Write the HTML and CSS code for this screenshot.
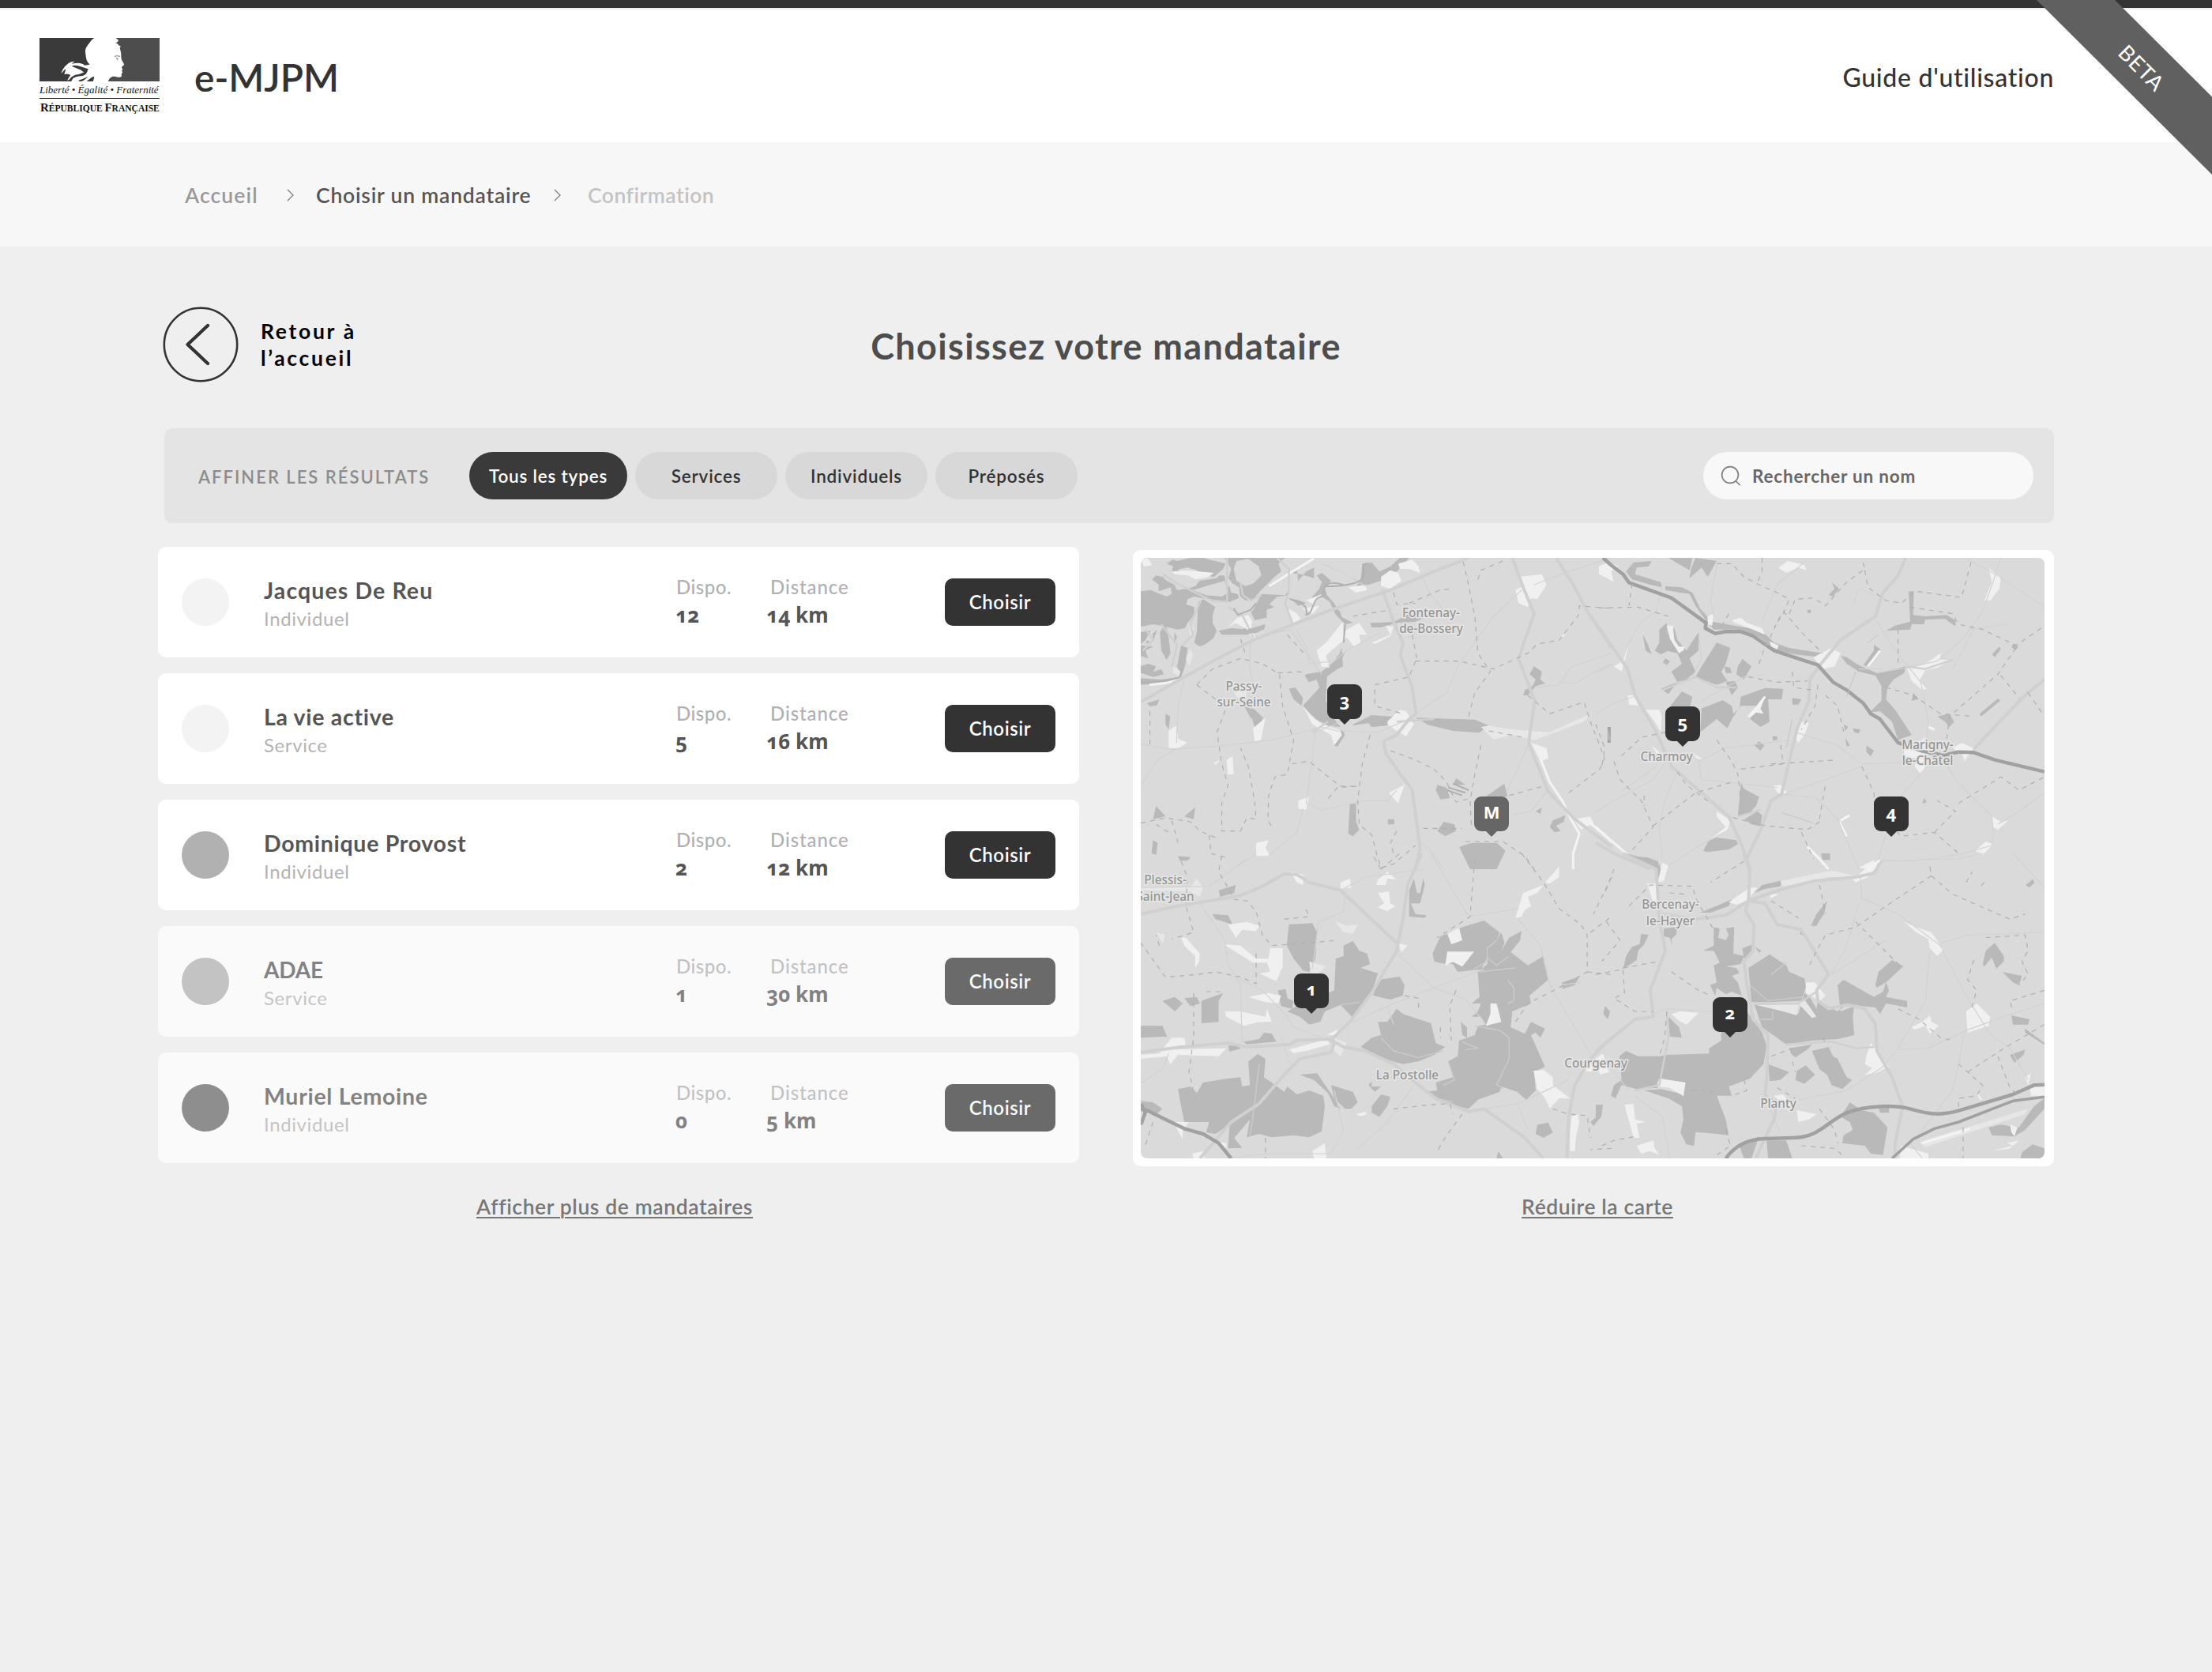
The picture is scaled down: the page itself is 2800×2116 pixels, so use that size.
FILE: index.html
```html
<!DOCTYPE html>
<html lang="fr">
<head>
<meta charset="utf-8">
<title>e-MJPM</title>
<link rel="stylesheet" href="styles.css">
</head>
<body>
<div class="topbar"></div>
<header class="header">
  <div class="logo">
    <svg class="logo-img" viewBox="150 144 456 165" preserveAspectRatio="none">
      <path fill="#3a3a3a" d="M150 144h230v165H150z"/>
      <path fill="#4d4d4d" d="M380 144h226v165H380z"/>
      <path fill="#fff" d="M358 144C347 150 343 160 334 170C325 183 322 188 325 205C327 222 328 234 341 245L322 248C312 240 300 238 289 240C276 240 272 243 268 248C275 240 278 236 284 233C268 232 255 243 247 252C240 260 236 268 232 279C240 272 243 266 250 262C248 270 246 276 244 283C252 277 262 282 268 285C262 292 258 298 256 307C265 300 270 296 278 296C275 301 272 305 271 309H330C338 302 346 294 357 291L354 309H411C414 296 424 289 434 290C444 292 456 296 461 291C464 285 459 282 463 278C467 274 466 271 461 269C465 267 467 264 464 260C460 255 464 252 468 250C473 247 471 243 468 238C462 228 459 220 460 210C461 200 456 190 455 181C460 178 458 172 452 173C449 170 448 165 437 163C446 162 452 155 448 150C444 149 442 147 441 144Z"/>
      <path fill="#3a3a3a" d="M274 250C292 244 314 256 336 262C332 268 328 273 322 275C306 266 288 262 274 258ZM286 284C304 282 320 274 333 266C330 280 322 288 304 289C294 290 284 294 276 297C258 304 262 296 286 284ZM300 305C312 300 322 296 334 290C326 300 318 306 308 309H298ZM330 309C340 300 350 292 358 290L352 309Z"/>
      <path fill="#fff" d="M268 250L312 268C302 276 290 274 272 281Z"/>
      <path fill="none" stroke="#999" stroke-width="4" d="M435 215C442 211 449 211 456 215M441 222C447 220 450 222 445 228"/>
    </svg>
    <div class="logo-motto">Liberté • Égalité • Fraternité</div>
    <div class="logo-name"><b>R</b>ÉPUBLIQUE <b>F</b>RANÇAISE</div>
  </div>
  <h1 class="brand">e-MJPM</h1>
  <a class="guide">Guide d'utilisation</a>
</header>
<div class="ribbon"><span>BETA</span></div>
<nav class="crumbs">
  <span class="c1">Accueil</span>
  <svg class="sep" viewBox="0 0 9 16"><path d="M1 1l7 7-7 7"/></svg>
  <span class="c2">Choisir un mandataire</span>
  <svg class="sep" viewBox="0 0 9 16"><path d="M1 1l7 7-7 7"/></svg>
  <span class="c3">Confirmation</span>
</nav>
<main class="main">
  <div class="head">
    <a class="back">
      <svg viewBox="0 0 96 96"><circle cx="48" cy="48" r="46.2" stroke-width="2.6"/><path d="M57 24L31.500 48L57 72" stroke-width="4.200"/></svg>
      <span class="back-text">Retour à<br>l’accueil</span>
    </a>
    <h2 class="title">Choisissez votre mandataire</h2>
  </div>
  <div class="filters">
    <span class="filters-label">AFFINER LES RÉSULTATS</span>
    <button class="pill on">Tous les types</button>
    <button class="pill">Services</button>
    <button class="pill">Individuels</button>
    <button class="pill">Préposés</button>
    <div class="search">
      <svg viewBox="0 0 26 27"><circle cx="12" cy="12" r="10.400"/><path d="M19 19.500l5.500 5.500"/></svg>
      <span>Rechercher un nom</span>
    </div>
  </div>
  <div class="cols">
    <section class="list">
      <article class="card"><i class="dot"></i><div class="who"><div class="name wide">Jacques De Reu</div><div class="kind">Individuel</div></div><div class="fact"><div class="lbl">Dispo.</div><div class="val">12</div></div><div class="fact dist"><div class="lbl">Distance</div><div class="val">14 km</div></div><button class="choose">Choisir</button></article>
      <article class="card"><i class="dot"></i><div class="who"><div class="name">La vie active</div><div class="kind">Service</div></div><div class="fact"><div class="lbl">Dispo.</div><div class="val">5</div></div><div class="fact dist"><div class="lbl">Distance</div><div class="val">16 km</div></div><button class="choose">Choisir</button></article>
      <article class="card"><i class="dot mid"></i><div class="who"><div class="name">Dominique Provost</div><div class="kind">Individuel</div></div><div class="fact"><div class="lbl">Dispo.</div><div class="val">2</div></div><div class="fact dist"><div class="lbl">Distance</div><div class="val">12 km</div></div><button class="choose">Choisir</button></article>
      <article class="card faded"><i class="dot mid"></i><div class="who"><div class="name caps">ADAE</div><div class="kind">Service</div></div><div class="fact"><div class="lbl">Dispo.</div><div class="val">1</div></div><div class="fact dist"><div class="lbl">Distance</div><div class="val">30 km</div></div><button class="choose">Choisir</button></article>
      <article class="card faded"><i class="dot dark"></i><div class="who"><div class="name">Muriel Lemoine</div><div class="kind">Individuel</div></div><div class="fact"><div class="lbl">Dispo.</div><div class="val">0</div></div><div class="fact dist"><div class="lbl">Distance</div><div class="val">5 km</div></div><button class="choose">Choisir</button></article>
      <a class="more more-list">Afficher plus de mandataires</a>
    </section>
    <section class="map-col">
      <div class="map-card">
        <div class="map">
          <svg class="map-svg" viewBox="1444 706 1144 760">
            <!-- river valley, north-west corner -->
            <g transform="translate(1440 700) scale(.33333)">
              <path class="f" d="M12 145L50 140L85 155L110 165L130 155L125 130L80 145L80 120L55 100L70 85L95 90L110 105L140 120L150 140L190 135L220 125L235 105L300 95L310 85H330L335 115L350 130L355 150L380 155L385 170L350 185L240 170L215 165L190 175L185 195L215 205L215 235L190 265L180 285L150 290L110 280L60 270L12 280Z"/>
              <path class="f" d="M110 40L135 25L150 30L200 18L250 18L285 28L335 40L325 60L290 90L250 85L225 65L190 55L160 60L145 75L130 70L135 50ZM330 18H560L535 40L545 70L520 90L490 120L465 145L440 175L410 180L390 165L385 130L360 115L345 95L355 60ZM230 185L250 175L295 205L285 235L285 265L300 295L290 320L260 345L235 355L215 340L225 300ZM440 215L470 155L530 165L500 195L520 205L490 215V245L445 255L430 225ZM470 155L560 160L580 135L570 160L500 170ZM570 170L615 180L640 190L610 200L595 185ZM580 75L605 60L610 105L640 70L670 55L670 95L620 80ZM700 75L735 105L710 130L720 160L745 190L770 225L780 260L750 230L730 185L700 165L660 170L690 135L700 110L680 85ZM310 300L360 285L400 290L420 275L415 295L340 310ZM440 285L480 280L460 300L440 305ZM12 300L50 295L30 330L12 345ZM85 300L105 270L115 300L125 380L110 405L90 370ZM12 350L60 355L30 370L40 400L12 390ZM40 320L75 290L60 330L30 345ZM165 350L190 360L180 430L165 470L150 430ZM12 430L40 420L70 430L60 450L90 440L100 460L60 470L12 455ZM140 300L150 320L140 340ZM12 475L90 480L160 470L150 482L90 495L12 500Z"/>
              <path class="f" d="M635 465L700 450L760 400L775 360L780 430L720 460L715 560L735 600L680 600L630 575L660 550L690 510L680 480L650 490ZM580 515L600 520L620 550L615 570L590 545ZM410 590L440 590L480 628H430ZM40 570L80 560L75 575L45 582Z"/>
              <path class="g" d="M375 30L420 22L460 50L470 85L440 115L410 125L375 105L365 60ZM365 205L430 180L455 185L440 210L380 235L365 225ZM40 305L60 310L50 340L35 330ZM210 140L330 105L345 150L320 165L260 160Z"/>
              <path class="u" d="M130 70L190 65L235 70L290 75L270 90L220 100L190 85L140 80ZM12 25L40 20L55 45L25 52ZM340 285L380 245L420 235L435 260L430 290L450 322L435 322L410 285L370 265ZM565 210L600 225L620 250L590 265ZM625 210L690 200L665 230ZM640 180L700 155L670 195ZM680 370L720 335L780 260V330L735 370L715 390L730 435L695 430L700 400Z"/>
              <path class="u2" d="M200 360L210 390L195 430L185 400ZM135 430L165 450L155 465L135 455ZM195 270L215 285L200 320ZM365 530L415 520L410 545L380 550Z"/>
              <path class="w" d="M45 500L110 493L175 475M500 125L580 75L670 20"/>
              <path class="r1" d="M95 80L150 115L240 160L280 180L340 185V18M390 110L400 160L430 180L470 160M345 205L400 240L440 320M530 20L575 60V150L560 190L590 270M30 290L60 330L20 370M90 270L150 350L130 430M240 180L200 270L210 310L170 350"/>
              <path class="k4" d="M365 210L380 235L430 215L450 190M705 165C700 115 730 105 780 120M700 165C660 170 670 230 640 235C650 200 620 185 580 175M12 492L100 485L160 472L170 440"/>
            </g>
            <!-- north-west quarter -->
            <g transform="translate(1420 680) scale(.39541 .33333)">
              <path class="f" d="M770 100L800 95L825 130L860 110L890 78L920 78L880 130L830 165L790 180L750 190L765 160ZM680 270L700 300L740 325L715 330L690 300ZM310 355L350 345L400 350L460 330L455 350L400 370L320 370ZM795 325L870 322L920 290L970 305L940 320L880 325L830 342L800 342ZM715 435L690 500L655 530L640 510L670 490L690 450ZM590 520L640 510L655 560L650 620L680 690L700 720L660 715L620 690L580 640L610 600L635 570L620 530L600 545ZM535 575L555 570L580 610L575 640L550 615ZM390 640L420 655L450 690L440 725L425 720L415 680ZM740 710L800 675L880 682L850 700L850 715L800 720L790 705L740 715ZM940 685L1130 692L1175 715L1145 742L1060 735L980 712ZM705 730L715 750L690 795L680 790ZM80 630L120 615L110 640L90 640ZM140 670L155 680L150 730L140 710ZM1320 490L1345 510L1340 540L1355 555L1325 565L1300 600L1285 600L1290 580L1315 565L1325 540L1305 520Z"/>
              <path class="f" d="M730 1010L750 1012V1080L760 1110L740 1135L725 1125ZM1165 985L1225 935L1235 985ZM1080 1175L1120 1160L1200 1160L1228 1190L1200 1260H1115ZM1010 940L1040 950L1050 990L1020 995L1005 960ZM1030 1080L1065 1090L1070 1115L1035 1135L1010 1115ZM1070 915L1100 940H1060ZM1380 1075L1420 1055L1415 1080L1390 1095L1405 1115L1385 1120L1370 1100ZM235 1025L230 1070L200 1060ZM110 1020L140 1060L100 1070ZM100 1150L115 1160L110 1205L95 1200ZM180 1210L220 1215L210 1228H185ZM1325 1040L1345 1025L1340 1050ZM852 1070H872V1090H852Z"/>
              <path class="u" d="M830 150L860 125L885 135L895 165L860 195L830 185ZM885 100L930 85L950 110L955 135L920 120L890 120ZM725 190L780 180L785 200L750 210ZM1270 150L1345 140L1360 180L1330 235L1310 230L1300 265L1270 250L1260 200L1285 185ZM1530 115L1568 105V165L1530 140ZM720 350L760 325L785 370L760 370L765 400L745 418L720 380L690 410L650 450L660 490L640 490L625 435L660 395L690 400ZM800 400L860 370L845 335L870 340L860 375L810 405ZM580 640L600 670L640 710L695 730L705 750L680 790L670 750L610 710ZM850 700L890 655L910 660L935 710L910 755L880 735L855 715ZM150 735L175 715L180 765L210 780L180 800L150 800ZM420 725L460 685L445 770L425 775ZM335 845L355 830L358 900L340 900ZM855 970L905 940L885 1010L865 985ZM565 1000L600 985L590 1035L565 1030ZM430 1160L470 1150L460 1180L475 1210L430 1210ZM1310 780L1360 800L1365 840L1340 850ZM1445 1070L1500 1060L1510 1085L1470 1110ZM295 855L315 845L300 865ZM1405 375L1425 365L1410 380Z"/>
              <path class="u2" d="M1150 720L1175 715L1250 730L1370 740L1500 670L1480 700L1400 735L1320 770L1250 750L1190 768Z"/>
              <path class="w" d="M1340 840L1370 930L1410 1000L1440 1075L1465 1125L1445 1200V1260M1500 1085L1568 1155"/>
              <path class="r" d="M61 625L200 530L300 465L420 390L540 335L660 280L860 200L1010 125L1110 78M835 200L870 320L900 400L892 450L930 570L942 670L920 690L880 750L838 775L845 820L880 880L930 960L940 1050L955 1180L940 1260M1250 78L1285 190L1320 290L1270 460L1322 620L1302 780L1365 965L1450 1070L1568 1175M1390 78L1440 170L1490 280L1568 420"/>
              <path class="r2" d="M61 785L160 805L330 790L480 770L640 720L690 735L820 740L900 700M200 540L180 640L175 780M410 390V500L430 640M640 520L540 350L430 380M660 490L720 430L830 360M940 670L1040 590L1080 480L1190 300L1280 200M1400 550L1450 555L1500 520L1568 480M720 690L620 740L605 880L590 1010L640 1035L780 1000L850 1000L880 960M61 940L120 840L180 800M1300 790L1260 900L1230 970M1320 570L1400 560L1440 490L1568 440M1320 180L1430 130L1568 78M960 150L990 220L1040 290M640 100L700 130L780 185M430 1200L370 1250M470 1210L560 1120L580 1030M940 1140L990 1190L1030 1260M680 470L600 480L590 420L560 350M1250 1055L1310 1040L1365 960"/>
              <path class="r1" d="M660 700L610 740M880 700L1000 690"/>
              <path class="d" d="M240 560L290 500L380 460L450 480L505 520L515 640L550 770L530 900L490 910L470 980L468 1070L480 1105M240 560L300 615L330 660L305 740L320 860L340 940L320 1010V1115H380L400 1065L430 1070L425 1000L405 870L380 800M500 515L570 510L600 530M940 470H1080L1190 500L1300 440L1330 405L1400 390L1460 300L1465 260L1568 270M940 470L920 530L810 560V640L900 670M1110 680L1130 590L1180 510L1140 440L1130 300L1110 180L1090 78M920 250L1020 200L1060 195M870 210L880 255L940 250M740 300L860 275M1140 160L1150 125L1230 85M1300 600L1370 670L1480 625L1500 700L1530 790L1545 840L1530 880L1420 980M1175 735L1290 760M1150 790L1130 900L1115 1000L1120 1110M795 750L770 860L755 1000L760 1090L800 1130L820 1220L830 1255L870 1240L940 1170M545 860L600 850L640 890L700 945H755L690 950L655 1000M860 810L940 845L1000 880L1040 930L1070 1005L1120 990M1240 980L1350 945M1100 1155L1220 1155L1290 1210L1320 1260M965 1105H1090M880 1115L860 1160L870 1200M61 1085L140 1065L220 1080L250 1115L310 1145M160 1075L180 1160M110 1090L150 1120M280 1130L285 1200L330 1215M90 660V790M930 370L945 465M530 370L590 450M380 385L395 440"/>
              <path class="d k" d="M650 185C700 190 770 175 770 150C785 130 760 110 785 98M715 330L710 400M1040 960L1090 980M1045 950L1100 970M1060 935L1110 960"/>
              <path class="k2" d="M1540 78L1568 110M1560 720V780"/>
            </g>
            <!-- north-east quarter -->
            <g transform="translate(2020 680) scale(.38265 .33333)">
              <path class="f" d="M100 130L125 95L185 90L175 110L135 115L130 140L215 170L220 190L180 180L120 160ZM240 78H320L310 125L280 105ZM330 78L400 90L370 150L350 115L310 155L315 120ZM230 185L285 190L320 210L345 270L385 320L480 340L545 350L590 400L640 420L750 440L740 455L660 445L600 430L540 380L470 350L390 350L360 310L330 260L310 215L280 210L230 200ZM240 350L260 345L270 390L300 430L340 360L340 430L310 460L330 510L300 540L270 550L250 510L285 480L270 440L230 430ZM210 350L235 325L240 430L215 445L195 430L210 400ZM155 370L170 400L185 445L165 430ZM400 400L445 420L430 480L415 510L435 545L400 560L330 530L350 490ZM485 462L515 490L490 540L465 520L470 490ZM215 575L270 550L240 595ZM430 550L460 545L470 570L450 600ZM285 585L320 605L310 650L240 650ZM350 650L420 618L450 640L455 670L475 650L480 605L560 572L620 575L615 615L570 615L575 700L545 720L510 690L530 640L480 640L455 680L435 725L400 690L345 740ZM650 610L680 615L670 635L650 635ZM780 170L805 195L785 225L770 220L790 195ZM1035 205H1052L1050 295L1090 300L1160 295L1190 315V338L1155 310L1090 312L1085 330L1045 330L1040 350L960 355L990 335L1040 320ZM755 460L790 450L795 475L770 495ZM920 408L942 425L895 490L885 485L920 430ZM810 450L830 455L870 485L930 515L990 500L1025 490L1020 515L985 540L965 570L960 615L990 655L1045 750L1000 770L980 700L940 660L905 665L945 620L945 565L925 525L870 510L830 480ZM1270 670L1330 612L1338 620L1275 680ZM1130 680L1170 670L1185 700L1170 720L1155 700ZM1380 405L1398 415L1390 428L1375 418ZM1310 445L1335 415L1340 425L1320 455ZM1050 590L1068 615L1045 620ZM480 930L490 955L540 985L530 1020L510 1045L470 1060ZM492 1070L535 1040L550 1055L545 1097L515 1090ZM375 1150L400 1140L465 1150L470 1165L440 1185L370 1195L355 1190ZM525 790L540 775L558 790L545 810ZM585 755H600V770H585ZM895 790L920 810L910 832L895 815ZM820 710L835 720L825 735ZM825 760L840 790L830 795ZM105 1210L170 1215L205 1230L215 1260H195L165 1225L130 1225ZM1085 990L1095 1005L1080 1012ZM40 720L50 770L40 770Z"/>
              <path class="f" d="M230 460L245 470L235 485L222 475ZM425 490L445 495L450 515L430 515ZM850 725L875 730L870 745L855 740ZM700 275H712V287H700ZM745 1200H775V1225H750Z"/>
              <path class="u" d="M10 110L45 95L75 110L50 130L60 170L30 150L10 140ZM605 115L635 90L690 105L697 125L670 115L630 135L610 120ZM1300 118L1340 150L1335 195L1305 240L1285 240L1310 170ZM235 335L255 335L260 390L275 415L295 415L290 430L275 440L245 385ZM450 315L480 305L500 325L550 345L560 370L520 350L460 325ZM60 490L90 470L108 405L100 450L85 510ZM105 600H130L140 640L110 635ZM165 655L210 655L218 680L215 740L195 700ZM1030 500L1090 480L1140 440L1140 465L1180 465L1130 495L1090 505L1070 545L1095 575L1080 580L1045 545ZM720 455L780 420L810 440L790 490L750 500ZM680 700L705 705L690 750L670 780L660 760ZM400 1040L445 1075L435 1115L375 1150L430 1100L400 1060ZM1020 810L1090 760L1100 800L1090 870L1075 900L1055 870L1060 840L1020 830ZM1180 800L1210 780L1250 800L1220 850L1210 820ZM585 945L610 940L635 970L610 980ZM500 680L560 605L545 650L555 670L530 665L510 685ZM185 790L225 830L200 820ZM320 820L360 845L335 840ZM1310 1060L1340 1080L1365 1075L1330 1110L1315 1100ZM1255 1190L1290 1155L1315 1165L1280 1205ZM870 1255L920 1225L925 1245L900 1260ZM575 395L605 410L600 425L580 415ZM370 300L390 290L385 335L370 330Z"/>
              <path class="w" d="M0 1100L105 1205M900 490L940 430M805 1080L830 1135M810 1075L840 1055M700 1175L735 1215L770 1260M560 605L510 680M1100 720L1120 730"/>
              <path class="r" d="M0 325L60 425L105 500L130 600L200 740L250 870L350 970L440 1060L480 1160L510 1260M1025 78L1000 145L950 210L925 300L810 390L745 480L708 540L705 620L665 730L640 850L615 975L580 1000L545 1110L500 1220M1484 540L1410 610L1250 805M0 1160L60 1200L180 1260"/>
              <path class="r2" d="M0 515L60 480M0 670L60 630L140 600M0 1045L60 1000L190 920L240 840M200 280L150 320L100 420M200 280L220 180M405 80L380 240L390 300M690 95L600 180L550 320M660 740L800 790L880 860L1040 855M630 970L760 920L880 870M620 975L730 990L800 1070L870 1260M1340 78L1320 150L1280 280L1210 390L1130 470L1030 495L930 515M1230 85L1330 145L1484 265M930 320L990 430L1075 550L1100 700L1095 760M1240 350L1360 330M1180 500L1250 350M340 850L430 800L640 770M340 850L350 920L480 935L600 950M1150 840L1190 920L1310 1060L1315 1120L1310 1170L1200 1205L1040 1230L940 1225M1080 890L990 1010L930 1240M200 870L90 960M560 520L490 530L350 620M340 360L350 460L320 530M1484 970L1400 1040L1330 1090M270 890L230 990L210 1100L220 1220M230 1255L330 1180L440 1110M870 190L920 220M870 195L850 260M950 500L870 500"/>
              <path class="r1" d="M220 580L330 530L400 570H465M470 1060L545 1035M1030 490L1090 500L1180 465"/>
              <path class="h" d="M25 78L50 105L90 140L110 172L250 230L365 325L362 345L395 365L430 358H480L520 375L590 430L735 485L785 550L830 580L885 630L910 670L940 690L1000 780L1080 812L1150 828L1200 815L1250 817L1320 845L1484 890"/>
              <path class="d" d="M10 268L140 265L240 300M120 175L110 260M400 100H450L490 150L540 180L600 210L640 235L620 290L590 340M620 280L680 360L750 440M640 290L660 235L720 230L760 260L830 170L890 120L880 78M890 125L900 190L960 240L1010 250L1060 205L1210 228L1245 78M1040 265L1180 290L1200 330L1280 350L1390 410L1480 340M1390 420L1330 520L1230 620L1170 680L1160 770M1340 525L1400 610M1430 590L1484 680M550 78V130L535 170M540 480L555 430L610 300M440 290L420 330M505 530L600 550L700 545M735 560L725 640L680 730M760 600L800 640L820 740M580 860L660 855L800 845M400 770L450 850L470 900L480 1000M480 880L620 860L610 780M0 710L30 800L20 870M60 850L80 920L150 1000L190 1100L110 1200M85 830L150 760L230 740M190 1095L330 970L450 930M880 870L920 970L925 1030L1010 1135L1120 1120L1200 1200M1120 1120L1190 1040L1130 1000M1200 1010L1340 910L1400 960L1484 910M740 1080L700 1110L560 1095L440 1060M740 1070L750 1000L760 940M680 1120L720 1220M960 570L1050 600L1140 670L1250 680M1000 350L1000 480M270 890L300 940L380 1010M160 980V1020M650 510L655 570L720 580"/>
              <path class="k3" d="M830 605L860 510M615 1045L720 1085M650 690L630 800M935 370L900 400"/>
            </g>
            <!-- south-west quarter -->
            <g transform="translate(1420 1080) scale(.39541 .33333)">
              <path class="f" d="M535 270L610 265L625 300L620 400L600 450L580 445L550 400L528 350ZM710 350L740 332L760 370L785 380L795 420L765 435L820 455L800 530L740 625L700 575L650 600L635 640L600 650L570 620L530 600L560 580L680 520L685 400L710 390ZM500 520L525 515L530 550L550 560L545 590L510 580ZM820 480L890 468L905 500L900 540L860 555L805 540ZM1090 280L1160 255L1210 300L1200 330L1150 440L1075 450L1060 420L1035 420L1000 410L995 380L1020 315ZM1200 330L1215 300L1225 340L1215 370L1240 320L1280 295L1275 330L1245 375L1300 425L1350 390L1365 480L1305 540L1310 570L1250 600L1245 660L1290 685L1310 640L1355 665L1340 700L1325 680L1310 690L1355 810L1320 830L1325 900L1295 935L1265 905L1215 885L1210 905L1140 935L1110 970L1040 950L975 905L1010 900L1005 870L1060 850L1045 790L1075 770L1080 710L1130 690L1140 655L1165 650L1150 620H1120L1140 600L1150 570H1120L1145 545L1140 450L1170 420L1175 360ZM1085 640L1105 660V700L1090 690ZM820 640L850 640L880 590L900 610L990 645L1005 720L1035 735L1000 765L950 790L900 800L840 780L765 735L800 700L830 690ZM290 230L340 235L355 270L300 250ZM310 140L365 120L360 150L315 165ZM130 560L170 545L195 570L170 600ZM200 550L240 545L250 570L220 580ZM255 560L325 530L310 560V640L255 645ZM61 655L130 655L145 695L61 700ZM390 715L440 705L455 680L480 685L495 715L400 725ZM340 730H370L380 742L345 752ZM920 140L935 95L945 150L955 150L965 95L970 120L955 190L925 190L940 230L975 235L970 245L920 240Z"/>
              <path class="f" d="M405 790L435 762L460 780L455 850L480 870L520 905L530 885L560 915L600 900L645 920L650 960L640 1055L600 1078L550 1070L480 1078L440 1065L400 1078L410 1010L360 1080L385 1118L340 1120L345 1030L300 1065L270 1060L280 1020L200 1020L190 960L180 895L220 885L240 910L260 870L340 855L380 850L385 885L410 880ZM570 840L625 835L680 930L700 970L680 960L660 910L615 860L590 850ZM670 880L740 905L755 945L735 970L715 970L680 930ZM790 880L800 865L800 885L830 885L810 905ZM800 960L830 915L860 925L850 960L825 1000L800 985ZM1410 490L1465 468L1450 500L1410 515ZM1330 1030L1365 1022L1380 1060L1350 1080L1325 1065ZM1520 955L1540 955L1535 1000L1510 1035L1500 1020L1520 1000ZM1545 580L1560 600L1550 625ZM61 940L100 945L130 970L110 990L75 980ZM1205 1130L1220 1158H1200ZM1090 0H1125L1110 25ZM1135 0H1220L1200 50L1160 40Z"/>
              <path class="u" d="M1042 305L1080 283L1090 330L1055 345ZM1042 373H1128L1090 430L1060 412L1035 427ZM1180 570L1200 570L1215 640L1165 655L1180 610ZM340 270L400 260L440 275L430 295L385 290L365 320ZM325 345L380 350L430 400L470 400L475 360L515 360L515 430L495 485L440 455L475 450L465 415L420 415ZM405 545L470 530L510 540L500 570L460 565ZM330 600L380 600L460 620L465 590L480 640L440 640L390 655L335 620ZM190 320L205 320L250 380L248 410L235 435L235 390L200 350ZM820 150L855 145L860 190L875 200L850 220L820 205L840 190ZM820 100L850 70L880 100L850 95L845 120L815 120ZM535 745L660 705L665 725L590 750L550 758ZM655 690L690 668L690 690ZM61 765L120 760L160 700L200 700L205 730L150 745L335 740L310 770L180 765L155 800L145 770L61 780ZM1355 110L1400 50L1400 90L1370 115ZM1285 150L1350 120L1330 150L1300 165L1310 200L1290 215L1280 240L1260 245ZM1318 825L1350 822L1380 850L1380 880L1435 930L1400 930L1370 968L1355 930L1330 895ZM1440 1000L1460 990L1465 1020L1455 1070L1450 1130H1435L1435 1060ZM885 340L915 350L895 375ZM750 990L780 980L785 990L765 998ZM1470 820L1540 760L1550 790L1500 830ZM540 70L580 80L580 120L560 110ZM700 110L730 95L735 130L700 135ZM610 1130L650 1100L655 1158H615ZM225 1140L260 1130L265 1158H230ZM310 1095L335 1100V1120ZM165 1020L215 1020L195 1050V1085Z"/>
              <path class="u2" d="M600 410L655 430L630 455H605ZM680 255L720 275L755 270L740 305L710 300ZM110 300L140 310L130 340ZM61 125L220 130L240 95L260 130L250 165L220 145L61 140ZM675 700L720 720L700 770L680 750Z"/>
              <path class="r" d="M61 230L180 200L380 160L450 125L520 78L560 80L600 110L700 140L880 340M960 0L915 120L900 250L880 370L800 530L730 640L670 708L710 735L780 750L870 800L950 880L1010 935L1110 980L1160 970L1290 1080L1350 1158M61 755L190 735L340 720L400 735L540 725L560 710L660 705L680 720L670 755L570 780L520 840L440 950L350 1020L250 1158M1568 700L1500 780L1450 880L1430 1000L1425 1158"/>
              <path class="r2" d="M880 380L1000 510L1100 555L1160 640M1000 510L850 580L740 640M1000 510L1160 440M715 160L710 220L630 260L610 440M250 190L330 330L340 420L380 500L385 720M380 480L450 520L530 620L550 660L640 700M61 870L130 820L150 760M930 890L850 1020L750 1130M680 900L710 1050L670 1140H460L340 1158M1270 250L1340 350L1370 500L1500 760M1370 505L1470 490M1160 970L1270 950L1430 860M1270 960L1300 1050M990 0L1110 240L1270 210M510 700L540 800M700 140L780 90L970 60M61 130L280 125L400 20M850 580L870 650"/>
              <path class="r1 th" d="M1130 655L1210 672L1240 700V750L1240 780L1200 880L1220 890M1200 330L1170 360V410L1120 445M440 800L420 1000L410 1070M1175 400L1200 425L1240 390M1145 450L1260 435M1235 480L1255 510V560L1235 570M1090 715L1140 740L1100 745M830 700L870 750L950 775L1030 750M1045 790L1065 860L1030 880M1010 930L1060 945M700 575L760 565"/>
              <path class="h" d="M61 970L85 978L140 1010L200 1045L260 1065L310 1100L350 1158M61 950L75 985L61 1030"/>
              <path class="d" d="M190 30L210 90L205 200L230 300L160 325M320 10L310 70L340 130L360 175L400 180L430 220L450 310L480 350L600 340L690 330M430 380V495L380 470L300 450L240 460L140 470L61 340M230 530V700L215 830L235 930M270 525L330 525M830 60L800 0M830 60L890 0M1130 20L1115 240L1010 320M1280 0L1350 110L1400 210L1470 270L1490 310V450L1400 510L1300 570L1260 640M1490 450L1568 460M1070 520L1050 580L1055 710M1020 660V700M870 970L980 955L1050 950L1060 990M1090 990L1040 1070L1010 1130M1380 970L1430 990L1490 995L1500 1080M520 250L600 240L585 200M120 350L110 310M905 540L950 550V590M1568 90L1510 230M1500 300L1568 240M100 1020L75 1110M460 1080V1158M1568 1120L1500 1125"/>
            </g>
            <!-- south-east quarter -->
            <g transform="translate(2020 1080) scale(.38265 .33333)">
              <path class="f" d="M100 0L150 15L190 25L215 60L210 95L190 55L150 30ZM525 150L550 120L615 103L610 125L560 135ZM345 225L420 190L450 175L440 200L380 225ZM225 285L270 280L265 310L250 325L255 355L245 320L225 315ZM150 305L175 310L160 345L140 370L135 405L90 440L100 390L120 355L145 345ZM765 180L755 230L740 255L730 275L712 275L730 230ZM390 280L410 285L405 320L430 330L440 310L430 285L458 280L455 380L490 390L480 420L430 430L465 435L475 455L450 465L470 490L483 540L450 525L430 535L400 510L395 540L378 500L400 490L390 425L410 415L390 370L355 370L390 350ZM485 360L520 345L525 360L490 400ZM575 383L630 425L640 450L690 475L695 505L680 560L570 565L515 565L505 435ZM525 355L548 370L540 377ZM800 500L820 480L920 545L950 525L960 490L970 520L960 545L1030 560L1030 585L960 570L940 610L925 585L880 580L835 570L800 600L735 560L730 590L710 550L690 530L670 610L560 580L525 575L550 660L630 725L720 710L800 705L855 690L850 620L855 580L810 600ZM925 500L935 450L980 405L1018 428L960 490L930 510ZM500 600L550 680L565 730L555 800L510 855L440 885L450 920L400 920L430 1010L440 1070L400 1065L330 1058L325 1110L300 1105L280 1060L290 1010L285 960L240 930L160 900L215 895L290 915L295 870L215 855L205 890L135 895L85 880L65 930L50 920L60 880L85 860L78 770L100 750L140 770L210 770L235 765L375 760V740L415 710V640L440 620ZM640 740L715 725L700 745L660 775L645 760ZM715 750L770 735L785 770L800 780L830 850L848 860L815 895L780 880L765 840L740 820ZM570 800L640 830L610 860L575 865ZM695 805L725 840L690 875L660 860L665 825ZM840 945L880 975L920 985L965 1040L950 1145L910 1140L890 1110L815 1100L820 1070L850 1050L840 1020L810 1000ZM1280 420L1290 370L1320 340L1350 390V410L1325 438L1310 395L1285 430ZM1345 450L1410 465L1400 500L1380 490ZM1375 615L1435 630L1430 650L1380 650ZM1420 665L1484 720V727L1420 680ZM1370 765L1420 745L1415 765L1385 795ZM1300 1040L1340 1030L1400 1040L1450 960L1484 930V970L1420 1050L1385 1075L1310 1070ZM1410 1135L1445 1105L1484 1120V1158H1405ZM1445 98L1452 110L1435 130L1422 120ZM475 1110L540 1075L515 1158H490ZM565 1090L630 1090L650 1158H570ZM30 580L47 600L40 630L25 610ZM0 955H22L18 1000L0 1010ZM240 620L275 660L285 700L245 695ZM680 280L690 315L675 305ZM935 965H970V985H940Z"/>
              <path class="u" d="M170 115H200L205 180L190 190L180 150ZM440 185L510 130L535 130L500 180L465 195ZM570 150L605 155L580 170ZM220 35L240 45L225 105L205 110ZM850 100L890 60L930 30L930 50L900 90L860 110ZM1020 260L1060 280L1110 300L1150 365L1130 390L1105 360L1100 325L1060 300ZM695 490L725 490L760 540L740 560L695 530ZM250 610L280 600L340 605L300 650L275 635ZM1045 660L1080 640L1105 615L1110 640L1135 655L1105 685L1090 655L1055 670ZM1225 600L1260 570L1305 620L1300 655L1230 680ZM895 770L910 720L970 810L925 835L890 840L915 815L890 800ZM210 855L297 870L290 922L245 890L200 885ZM665 975L730 990L705 1010L670 1020ZM95 955L125 950L130 1010L165 1020L135 1025L145 1080H125ZM135 1110L190 1090L195 1120L210 1145L180 1130L150 1140ZM1420 850L1440 835L1430 880ZM1435 890L1484 880V920H1440ZM1310 1130L1380 1110L1360 1100L1400 1090L1370 1120ZM590 920L620 915L650 960L635 975ZM1005 1158L1010 1110L1100 1140V1158ZM1260 905L1280 935H1270ZM0 800L30 790L45 830L15 840ZM1370 1030L1395 1040L1385 1075L1375 1060Z"/>
              <path class="u2" d="M610 105L780 65L860 85L840 90L770 90L620 125ZM1070 1095L1430 970L1420 990L1090 1115ZM530 575L670 570L665 615L620 600ZM670 570L690 555L730 620L715 625Z"/>
              <path class="r" d="M490 0L510 70L505 175L495 220L523 270L520 370L490 410L500 500L520 630L570 690L565 850L560 920L600 950L590 1010L560 1080L530 1158M505 180L560 190L600 270L680 290L770 460L730 520L735 560L770 590L830 575L890 590L925 650L930 750L980 850L1015 960L990 1100V1158M505 180L620 135L720 105L860 90L920 75L945 30M505 180L430 235L330 250L220 230M90 0L200 60L210 250L230 370L180 520L190 620L130 630L0 750"/>
              <path class="r1" d="M630 725L780 715L860 740L920 735M520 572L670 570L730 525M130 900L210 880L240 700L235 600"/>
              <path class="r2" d="M875 90L880 170L1000 230L1140 350L1220 530L1300 680L1370 740L1430 860M1140 340L1230 310L1484 300M1105 370L1090 560L1000 740L950 810L830 900L650 940M1000 745L1100 740L1230 670L1350 620L1484 570M1220 680L1200 800L1180 900L1060 1080M870 190L830 350L780 460L960 330M190 610L230 590L390 600M130 920L220 1000L245 1158M560 930L610 1060M945 30L1200 20L1280 0M1380 0L1484 130M60 830L110 900M1040 1100L1080 1158"/>
              <path class="h" d="M430 1158C460 1110 500 1085 560 1083L650 1080C740 1080 760 1020 830 985C900 955 990 955 1040 970C1100 990 1140 1000 1220 970L1380 915L1450 880L1484 878"/>
              <path class="h n" d="M980 1158L1050 1085L1120 1045L1200 1020L1380 940L1484 925"/>
              <path class="w" d="M900 60L940 25M1080 1100L1240 1045"/>
              <path class="r1 th" d="M510 500L570 560L690 545M580 460L630 415M535 630H585V600"/>
              <path class="d" d="M60 60L30 150M110 200L180 120L320 125L330 170L390 290M245 150L300 155M250 450L340 520L380 540M0 460L90 440L95 530L60 550L130 600H190M90 435L210 410M35 260L80 330L20 410M490 30L380 110M1105 50L1110 85L1180 155L1370 250L1420 230M1110 85L960 200L860 280L760 310L730 370L700 440M860 260L1000 420M580 180L670 245M740 120L760 230M1000 590L1070 630L1140 700L1180 710M1250 405L1230 480L1260 520L1240 600M1290 320L1420 310L1430 370L1410 410L1430 460L1400 500M1484 520L1370 560L1380 600M1230 830L1350 740L1484 650M1200 800L1280 880L1260 920L1200 930V970M1330 770L1370 890L1400 920M235 600L228 700L210 770M580 770L650 740M650 790L660 830M490 860L500 900L450 920M600 890L660 930M740 970L790 1050L800 1100M315 900H380L400 930M430 1050L445 1110M400 1145L440 1115M20 1110L60 1090L130 1075M680 1110L790 1120L820 1150M1215 1040V1158M1225 110L1245 70M1285 110L1270 130M750 700L760 720"/>
            </g>
            <g class="town" text-anchor="middle">
              <text x="1811.500" y="780.600">Fontenay-</text><text x="1811.500" y="800.800">de-Bossery</text>
              <text x="1574.500" y="873.700">Passy-</text><text x="1574.500" y="893.800">sur-Seine</text>
              <text x="2109.500" y="962.700">Charmoy</text>
              <text x="2440" y="947.700">Marigny-</text><text x="2440" y="968">le-Châtel</text>
              <text x="1475" y="1119">Plessis-</text><text x="1475" y="1139.500">Saint-Jean</text>
              <text x="1781.500" y="1366">La Postolle</text>
              <text x="2020" y="1350.700">Courgenay</text>
              <text x="2114.500" y="1150.300">Bercenay-</text><text x="2114.500" y="1171">le-Hayer</text>
              <text x="2251" y="1401.700">Planty</text>
            </g>
          </svg>
          <span class="pin p3">3</span>
          <span class="pin p5">5</span>
          <span class="pin p4">4</span>
          <span class="pin pm">M</span>
          <span class="pin p1">1</span>
          <span class="pin p2">2</span>
        </div>
      </div>
      <a class="more more-map">Réduire la carte</a>
    </section>
  </div>
</main>
</body>
</html>
```
FILE: styles.css
```css
* { box-sizing: border-box; }
body { margin: 0; background: #efefef; color: #333; font-family: Lato, "Noto Sans", sans-serif; font-variant-numeric: oldstyle-nums; position: relative; overflow: hidden; width: 2800px; height: 2116px; }
h1, h2 { margin: 0; }
button { font: inherit; border: 0; padding: 0; }
.topbar { height: 10px; background: #333; margin-bottom: 2px; }
.header { height: 168px; background: #fff; display: flex; padding: 0 200px 0 50px; }
.logo { width: 152px; margin-top: 36px; color: #111; white-space: nowrap; }
.logo-img { display: block; width: 152px; height: 55px; }
.logo-motto { font: italic 13px/16px "Liberation Serif", serif; margin-top: 3px; border-bottom: 1px solid #222; height: 19px; }
.logo-name { font: bold 11.6px/18px "Liberation Serif", serif; margin: 2px 0 0 1px; letter-spacing: -.05px; }
.logo-name b { font-size: 15px; }
.brand { font-size: 48px; font-weight: 600; line-height: 60px; margin: 56px 0 0 44px; }
.guide { font-size: 32px; line-height: 40px; margin: 66px 0 0 auto; font-weight: 500; letter-spacing: .7px; }
.ribbon { position: absolute; top: 0; right: 0; width: 222px; height: 221px; background: #606060; clip-path: polygon(0 0, 44.6% 0, 100% 55.4%, 100% 100%); }
.ribbon span { position: absolute; left: 92px; top: 69px; width: 82px; text-align: center; font-size: 27px; line-height: 34px; letter-spacing: 1px; color: #fff; transform: rotate(45deg); }
.crumbs { height: 132px; background: #f7f7f7; display: flex; align-items: center; padding: 2px 0 0 234px; font-size: 26.5px; font-weight: 600; line-height: 36px; white-space: nowrap; }
.sep { width: 9px; height: 16px; fill: none; stroke: #808080; stroke-width: 1.3; }
.c1 { color: #999; width: 129px; letter-spacing: 1.1px; }
.c2 { color: #555; width: 301px; margin-left: 28px; letter-spacing: .8px; }
.c3 { color: #c3c3c3; margin-left: 34px; letter-spacing: .5px; }
.main { padding: 76px 200px 0; }
.head { position: relative; height: 154px; display: flex; justify-content: center; }
.back { position: absolute; left: 6px; top: 0; display: flex; }
.back svg { width: 96px; height: 96px; fill: none; stroke: #333; stroke-linecap: round; stroke-linejoin: round; }
.back-text { margin: 14px 0 0 28px; color: #000; font-size: 26.5px; font-weight: 700; line-height: 34px; letter-spacing: 2.7px; white-space: nowrap; }
.title { color: #4d4d4d; font-size: 45px; font-weight: 700; line-height: 60px; padding-top: 20px; letter-spacing: 1.35px; }
.filters { margin-left: 8px; height: 120px; border-radius: 10px; background: #e4e4e4; display: flex; align-items: center; gap: 10px; padding: 0 26px 0 43px; font-size: 22.5px; font-weight: 600; white-space: nowrap; }
.filters-label { color: #8c8c8c; width: 333px; font-size: 22px; letter-spacing: 2px; padding-top: 3px; }
.pill { width: 180px; height: 60px; border-radius: 30px; background: #d8d8d8; color: #333; letter-spacing: .8px; }
.pill.on { width: 200px; background: #3a3a3a; color: #fff; }
.search { margin-left: auto; width: 418px; height: 60px; border-radius: 30px; background: #f8f8f8; display: flex; align-items: center; padding-left: 22px; color: #6b6767; font-weight: 700; letter-spacing: .8px; }
.search svg { width: 26px; height: 27px; margin-right: 14px; fill: none; stroke: #808080; stroke-width: 1.7; }
.cols { display: flex; justify-content: space-between; }
.list { width: 1166px; padding-top: 30px; display: flex; flex-direction: column; gap: 20px; }
.card { height: 140px; border-radius: 10px; background: #fff; display: grid; grid-template-columns: 104px 522px 115px 225px 140px; padding: 0 30px; }
.card.faded { opacity: .7; }
.dot { width: 60px; height: 60px; margin-top: 40px; border-radius: 50%; background: #f3f3f3; }
.dot.mid { background: #b1b1b1; }
.dot.dark { background: #666; }
.who { padding-top: 38px; }
.name { color: #555; font-size: 28.5px; font-weight: 700; line-height: 34px; letter-spacing: .7px; }
.name.wide { letter-spacing: 1.1px; }
.name.caps { font-size: 28px; letter-spacing: -.2px; }
.kind { color: #b3b3b3; font-size: 24px; line-height: 38px; letter-spacing: .6px; }
.fact { padding-top: 34px; }
.lbl { color: #b0b0b0; font-size: 24px; font-weight: 500; line-height: 34px; letter-spacing: .5px; }
.dist .lbl { padding-left: 4px; letter-spacing: .9px; }
.val { color: #555; font-family: "Noto Sans", sans-serif; font-size: 26px; font-weight: 700; line-height: 36px; margin-left: -1px; }
.choose { height: 60px; margin-top: 40px; padding-bottom: 2px; border-radius: 10px; background: #333; color: #fff; font-size: 24px; font-weight: 600; letter-spacing: .6px; }
.more { align-self: center; color: #777; font-size: 26.5px; font-weight: 600; line-height: 36px; letter-spacing: .6px; text-decoration: underline; text-decoration-thickness: 2px; text-underline-offset: 3px; }
.more-list { margin: 17px 10px 0 0; }
.map-col { width: 1166px; padding-top: 34px; display: flex; flex-direction: column; }
.map-card { height: 780px; border-radius: 10px; background: #fff; padding: 10px 12px 10px 10px; }
.map { position: relative; height: 760px; border-radius: 8px; overflow: hidden; background: #dadada; }
.map-svg { display: block; width: 1144px; height: 760px; }
.map-svg path { vector-effect: non-scaling-stroke; }
.map-svg .f { fill: #b9b9b9; }
.map-svg .g { fill: #dadada; }
.map-svg .u { fill: #f0f0f0; }
.map-svg .u2 { fill: #e7e7e7; }
.map-svg .w, .map-svg .r, .map-svg .r1, .map-svg .r2, .map-svg .h, .map-svg .d, .map-svg .k2, .map-svg .k3, .map-svg .k4 { fill: none; stroke-linejoin: round; }
.map-svg .w { stroke: #f4f4f4; stroke-width: 3; }
.map-svg .r { stroke: #d0d0d0; stroke-width: 4; }
.map-svg .r1 { stroke: #d0d0d0; stroke-width: 2.5; }
.map-svg .r1.th { stroke: #cbcbcb; stroke-width: 1.4; }
.map-svg .r2 { stroke: #d2d2d2; stroke-width: 1.2; }
.map-svg .h { stroke: #a1a1a1; stroke-width: 4.5; }
.map-svg .h.n { stroke-width: 3.5; }
.map-svg .d { stroke: #b0b0b0; stroke-width: 1.2; stroke-dasharray: 6 6; }
.map-svg .d.k { stroke-dasharray: none; stroke-width: 2; }
.map-svg .k2 { stroke: #a1a1a1; stroke-width: 4; }
.map-svg .k3 { stroke: #c4c4c4; stroke-width: 1; }
.map-svg .k4 { stroke: #b2b2b2; stroke-width: 2; }
.town { font: 500 15.3px "Noto Sans", sans-serif; fill: #959595; stroke: #e6e6e6; stroke-width: 3px; paint-order: stroke; }
.pin { position: absolute; width: 44px; height: 44px; border-radius: 9px; background: #333; color: #fff; font-family: "Noto Sans", sans-serif; font-size: 22px; font-weight: 700; line-height: 39px; text-align: center; }
.pin::after { content: ""; position: absolute; left: 15px; top: 44px; border: 7px solid transparent; border-top-color: #333; border-bottom: 0; }
.p3 { left: 236px; top: 160px; }
.p5 { left: 664px; top: 188px; }
.p4 { left: 928px; top: 302px; }
.pm { left: 422px; top: 302px; background: #666; }
.pm::after { border-top-color: #666; }
.p1 { left: 194px; top: 526px; }
.p2 { left: 724px; top: 556px; }
.more-map { margin: 33px 0 0 10px; }
```
